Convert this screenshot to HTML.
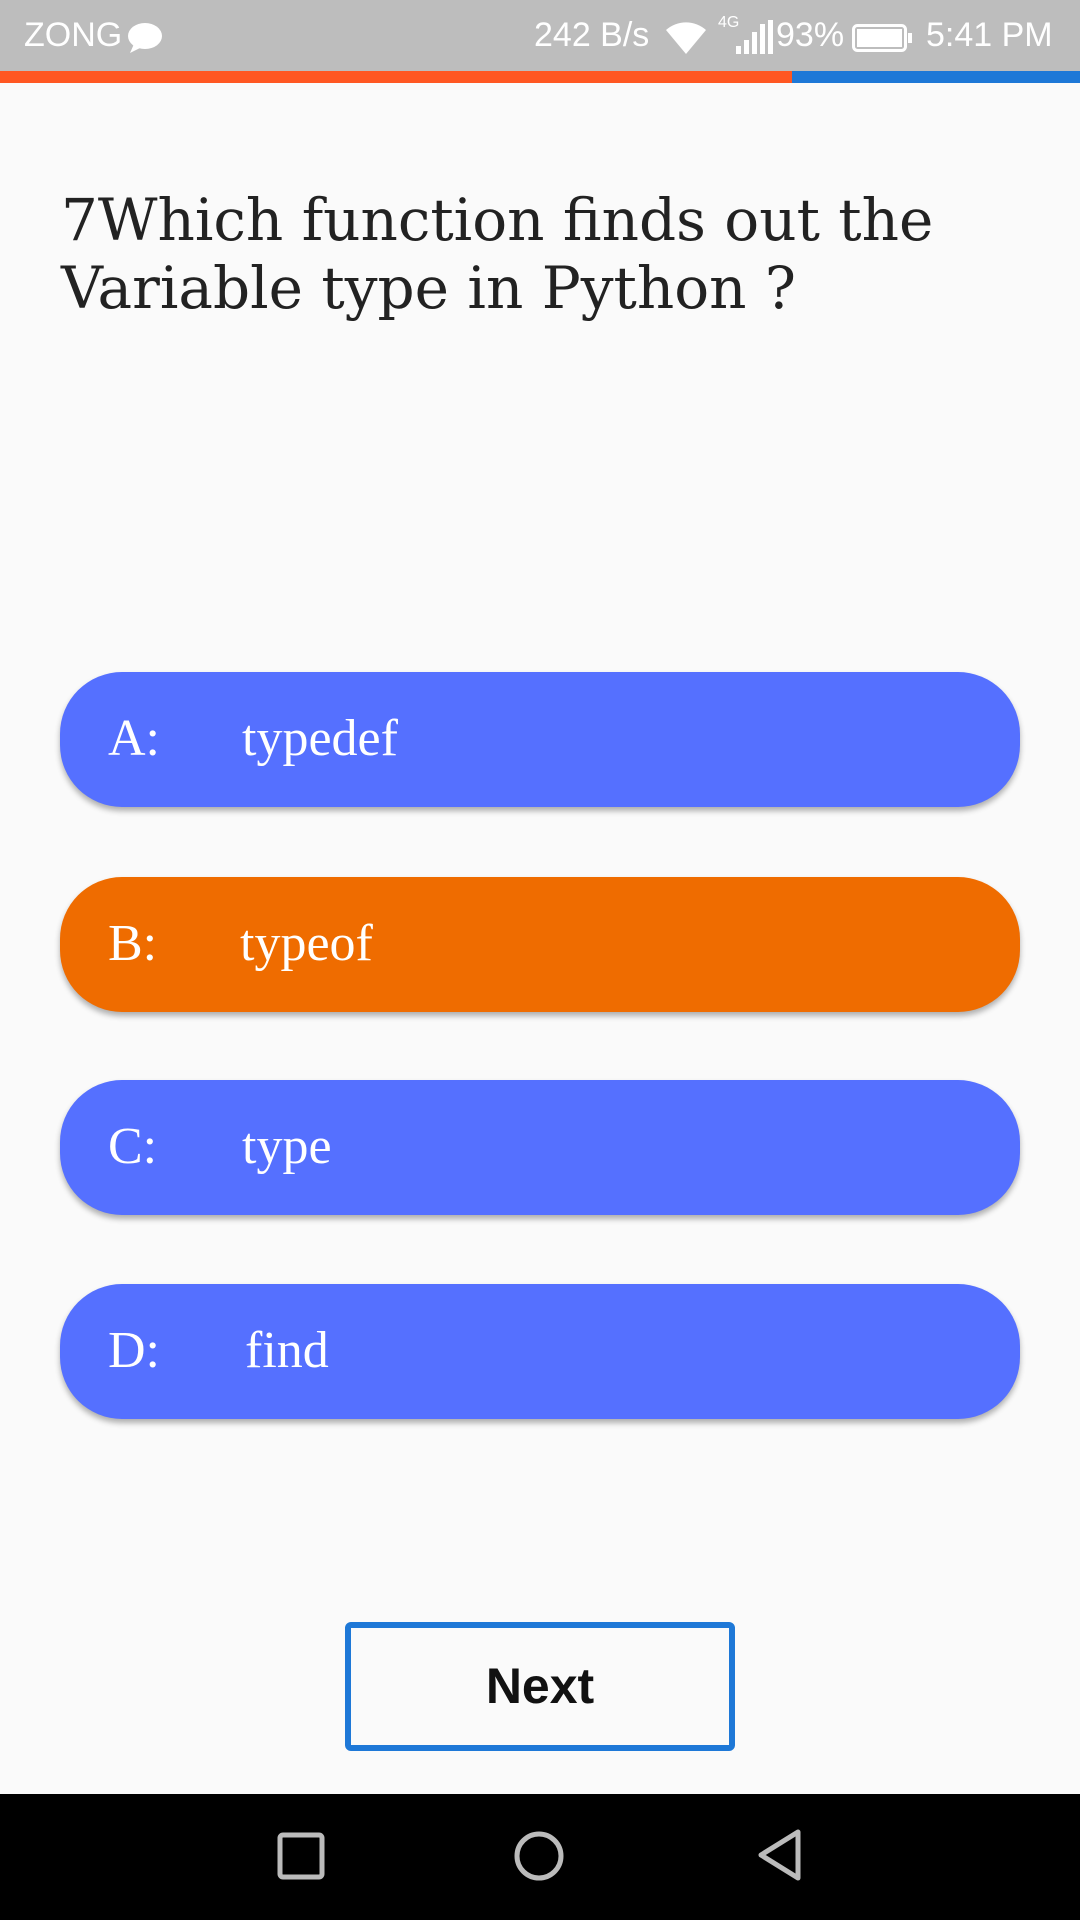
<!DOCTYPE html>
<html><head><meta charset="utf-8">
<style>
*{margin:0;padding:0;box-sizing:border-box}
body{width:1080px;height:1920px;background:#FAFAFA;position:relative;overflow:hidden;font-family:"Liberation Sans",sans-serif}
.status{position:absolute;left:0;top:0;width:1080px;height:71px;background:#BDBDBD;color:#fff;font-size:34px}
.status span{position:absolute;top:16px}
.prog{position:absolute;top:71px;left:0;height:12px;width:1080px;background:#1E78D7}
.prog div{width:792px;height:100%;background:#FF5722}
.q{position:absolute;left:61px;top:186px;font-family:"DejaVu Serif","Liberation Serif",serif;font-size:58px;line-height:68px;color:#222}
.opt{position:absolute;left:60px;width:960px;height:135px;border-radius:62px;background:#5570FF;color:#fff;font-family:"Liberation Serif",serif;font-size:52px;box-shadow:0 4px 6px rgba(0,0,0,.3)}
.opt .l{position:absolute;left:48px;top:37px}
.opt .t{position:absolute;left:182px;top:37px}
.next{position:absolute;left:345px;top:1622px;width:390px;height:129px;border:6px solid #1E78D7;border-radius:6px;font-weight:bold;font-size:50px;text-align:center;line-height:117px;color:#111}
.nav{position:absolute;left:0;top:1794px;width:1080px;height:126px;background:#000}
</style></head><body>
<div class="status">
<span style="left:24px">ZONG</span>
<svg style="position:absolute;left:126px;top:22px" width="38" height="32" viewBox="0 0 38 32"><ellipse cx="19" cy="14" rx="17" ry="13" fill="#fff"/><path d="M8 22 L4 31 L16 25Z" fill="#fff"/></svg>
<span style="left:534px">242 B/s</span>
<svg style="position:absolute;left:664px;top:20px" width="44" height="34" viewBox="0 0 44 34"><path d="M2 10 A30 30 0 0 1 42 10 L22 34Z" fill="#fff"/></svg>
<span style="left:718px;top:14px;font-size:16px">4G</span>
<svg style="position:absolute;left:734px;top:20px" width="40" height="34" viewBox="0 0 40 34"><rect x="2" y="26" width="5" height="8" fill="#fff"/><rect x="10" y="20" width="5" height="14" fill="#fff"/><rect x="18" y="12" width="5" height="22" fill="#fff"/><rect x="26" y="4" width="5" height="30" fill="#fff"/><rect x="34" y="0" width="5" height="34" fill="#fff"/></svg>
<span style="left:776px">93%</span>
<svg style="position:absolute;left:852px;top:24px" width="62" height="28" viewBox="0 0 62 28"><rect x="1.5" y="1.5" width="52" height="25" rx="4" fill="none" stroke="#fff" stroke-width="3"/><rect x="5" y="5" width="45" height="18" fill="#fff"/><rect x="56" y="9" width="4" height="10" fill="#fff"/></svg>
<span style="left:926px">5:41 PM</span>
</div>
<div class="prog"><div></div></div>
<div class="q">7Which function finds out the<br>Variable type in Python ?</div>
<div class="opt" style="top:672px"><span class="l">A:</span><span class="t">typedef</span></div>
<div class="opt" style="top:877px;background:#EF6C00"><span class="l">B:</span><span class="t" style="left:180px">typeof</span></div>
<div class="opt" style="top:1080px"><span class="l">C:</span><span class="t">type</span></div>
<div class="opt" style="top:1284px"><span class="l">D:</span><span class="t" style="left:185px">find</span></div>
<div class="next">Next</div>
<div class="nav">
<svg style="position:absolute;left:277px;top:38px" width="48" height="48" viewBox="0 0 48 48"><rect x="3" y="3" width="42" height="42" rx="3" fill="none" stroke="#bbb" stroke-width="5"/></svg>
<svg style="position:absolute;left:513px;top:36px" width="52" height="52" viewBox="0 0 52 52"><circle cx="26" cy="26" r="22" fill="none" stroke="#bbb" stroke-width="5"/></svg>
<svg style="position:absolute;left:756px;top:34px" width="48" height="54" viewBox="0 0 48 54"><path d="M42 4 L5 27 L42 50Z" fill="none" stroke="#bbb" stroke-width="5" stroke-linejoin="round"/></svg>
</div>
</body></html>
